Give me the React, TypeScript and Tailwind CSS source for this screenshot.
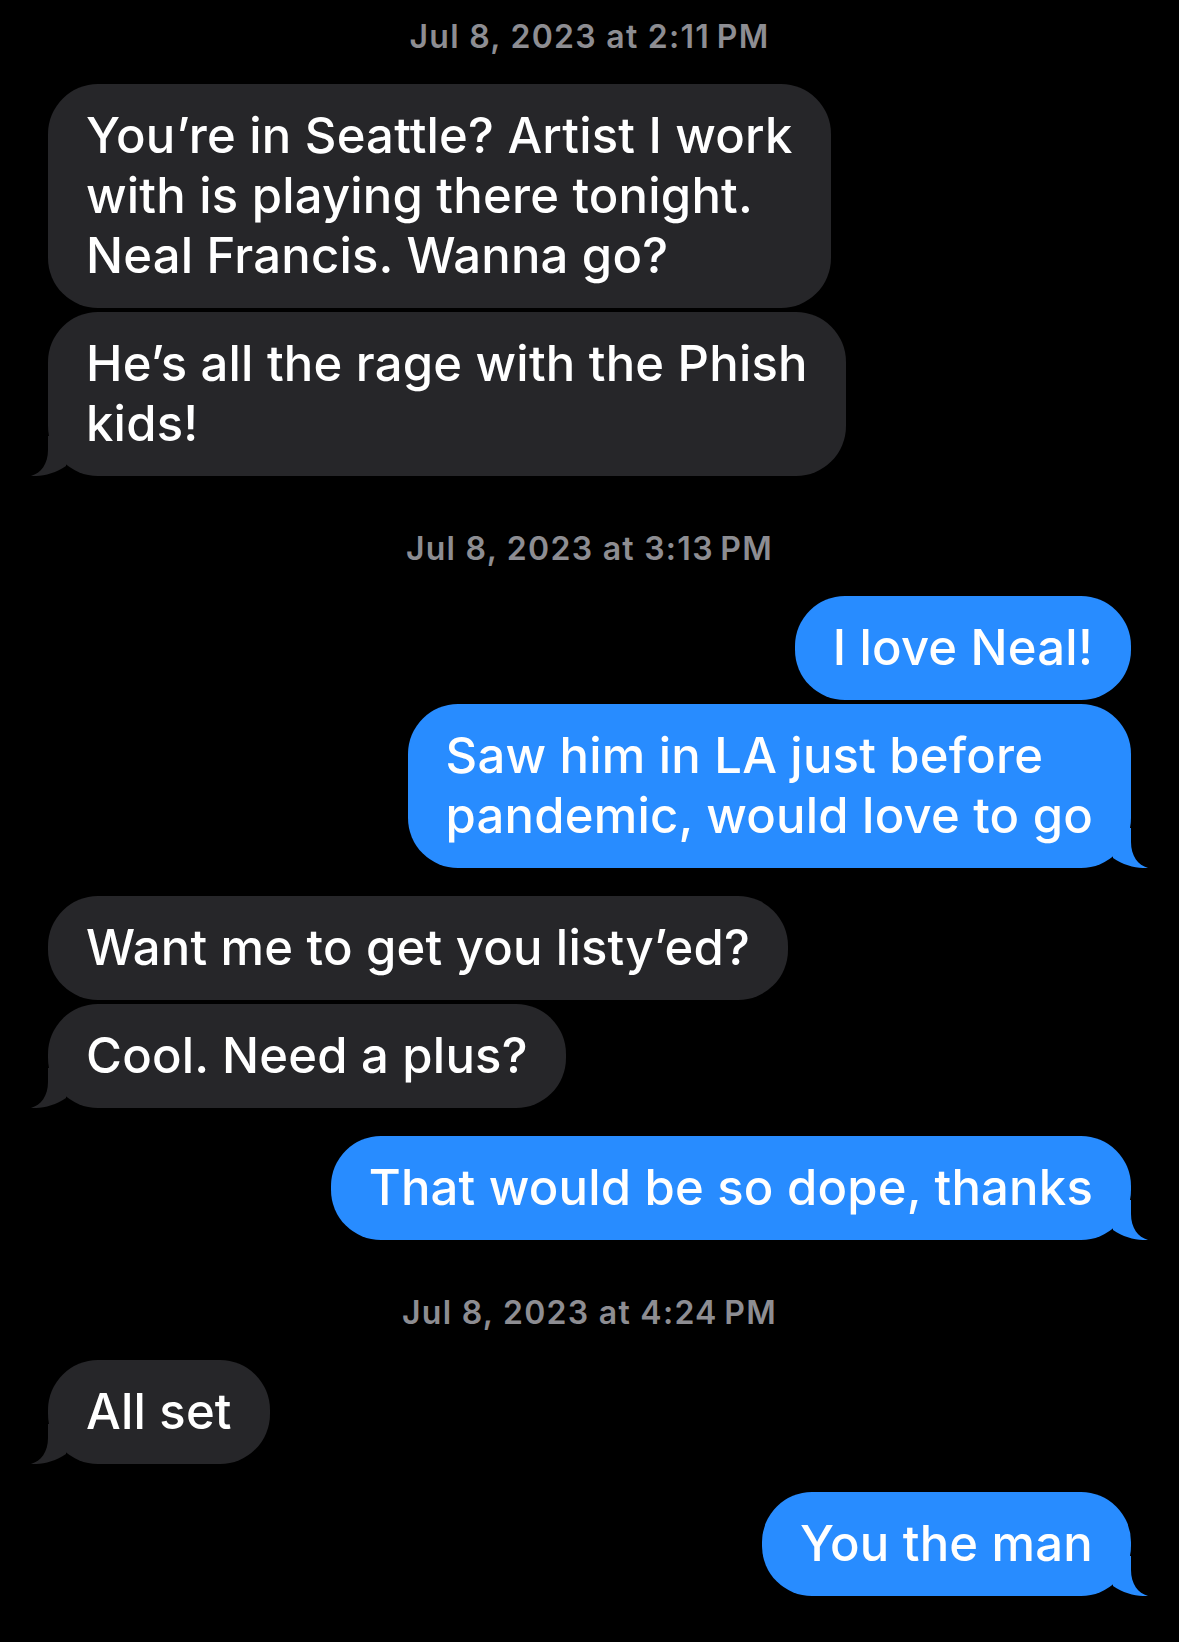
import React from "react"

type Item =
  | { kind: "time"; text: string }
  | { kind: "msg"; me: boolean; lines: string[]; tail?: boolean }

const items: Item[] = [
  { kind: "time", text: "Jul 8, 2023 at 2:11\u202FPM" },
  { kind: "msg", me: false, lines: ["You’re in Seattle? Artist I work", "with is playing there tonight.", "Neal Francis. Wanna go?"] },
  { kind: "msg", me: false, lines: ["He’s all the rage with the Phish", "kids!"], tail: true },
  { kind: "time", text: "Jul 8, 2023 at 3:13\u202FPM" },
  { kind: "msg", me: true, lines: ["I love Neal!"] },
  { kind: "msg", me: true, lines: ["Saw him in LA just before", "pandemic, would love to go"], tail: true },
  { kind: "msg", me: false, lines: ["Want me to get you listy’ed?"] },
  { kind: "msg", me: false, lines: ["Cool. Need a plus?"], tail: true },
  { kind: "msg", me: true, lines: ["That would be so dope, thanks"], tail: true },
  { kind: "time", text: "Jul 8, 2023 at 4:24\u202FPM" },
  { kind: "msg", me: false, lines: ["All set"], tail: true },
  { kind: "msg", me: true, lines: ["You the man"], tail: true },
]

function Tail({ me }: { me: boolean }) {
  return (
    <svg
      width="36"
      height="40"
      viewBox="0 0 36 40"
      className={me ? "absolute bottom-0 right-[-17px]" : "absolute bottom-0 left-[-17px] -scale-x-100"}
    >
      <path
        d="M19 0 L19 14 C19 28 26 37 36 40 C26 40.5 12 38 1 30 L1 0 Z"
        fill={me ? "#288cff" : "#262629"}
      />
    </svg>
  )
}

function Bubble({ me, lines, tail }: { me: boolean; lines: string[]; tail?: boolean }) {
  return (
    <div
      className={
        me
          ? "relative self-end rounded-[50px] bg-[#288cff] px-[38px] py-[22px]"
          : "relative self-start rounded-[50px] bg-[#262629] px-[38px] py-[22px]"
      }
    >
      {tail && <Tail me={me} />}
      <div className="relative text-[49px] leading-[60px] font-medium tracking-[0.2px] text-white whitespace-nowrap">
        {lines.map((l, i) => (
          <div key={i}>{l}</div>
        ))}
      </div>
    </div>
  )
}

export default function App() {
  return (
    <div className="min-h-screen bg-black px-[48px] pt-[19px] font-['Inter','Noto_Sans',sans-serif] overflow-hidden">
      <div className="flex flex-col">
        {items.map((it, i) => {
          const prev = items[i - 1]
          if (it.kind === "time") {
            return (
              <div
                key={i}
                className={
                  (i === 0 ? "" : "mt-[55px] ") +
                  "text-center text-[32px] leading-[36px] font-semibold tracking-[0.04em] text-[#8d8d92]"
                }
              >
                {it.text}
              </div>
            )
          }
          let mt = "mt-[28px]"
          if (!prev) mt = ""
          else if (prev.kind === "time") mt = "mt-[29px]"
          else if (prev.me === it.me) mt = "mt-[4px]"
          return (
            <div key={i} className={"flex flex-col " + mt}>
              <Bubble me={it.me} lines={it.lines} tail={it.tail} />
            </div>
          )
        })}
      </div>
    </div>
  )
}
